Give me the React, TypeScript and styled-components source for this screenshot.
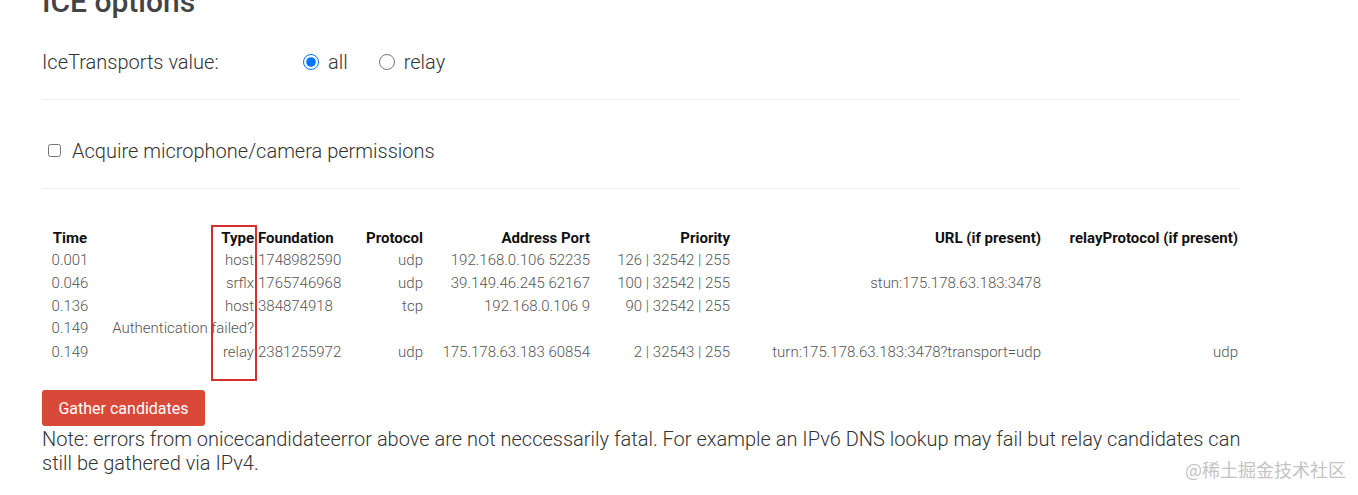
import { styled, createGlobalStyle } from "styled-components";

const GlobalStyle = createGlobalStyle`
    body {
        margin: 0;
        background: #fff;
        font-family: Roboto, "Liberation Sans", sans-serif;
        font-weight: 300;
        color: #444;
    }
`

const Page = styled.div`
    position: relative;
    box-sizing: border-box;
    width: 1358px;
    height: 495px;
    padding: 0 117px 0 42px;
    overflow: hidden;
`

const Title = styled.h2`
    margin: -16px 0 0;
    height: 36px;
    line-height: 36px;
    font-size: 30px;
    font-weight: 500;
    color: #444;
`

const OptionRow = styled.div<{ $top: number }>`
    display: flex;
    align-items: center;
    height: 40px;
    margin-top: ${p => p.$top}px;
    font-size: 20px;
    color: #333;
`

const OptionLabel = styled.span`
    width: 261px;
`

const Radio = styled.input.attrs({ type: "radio", name: "transports" })`
    width: 16px;
    height: 16px;
    margin: 0 9px 0 0;
    accent-color: #0075ff;
`

const RadioText = styled.span`
    margin-right: 31px;
`

const CheckBox = styled.input.attrs({ type: "checkbox" })`
    width: 13px;
    height: 13px;
    margin: -2px 11px 0 6px;
`

const Rule = styled.hr<{ $top: number }>`
    margin: ${p => p.$top}px 0 0;
    border: 0;
    border-top: 1px solid #eee;
    height: 0;
`

const TableWrap = styled.div`
    position: relative;
    margin-top: 37px;
`

const Table = styled.table`
    table-layout: fixed;
    width: 1199px;
    border-spacing: 2px;
    font-size: 15px;
`

const Head = styled.th<{ $w: number; $align: string }>`
    box-sizing: border-box;
    width: ${p => p.$w}px;
    padding: 1px;
    line-height: 18px;
    text-align: ${p => p.$align};
    font-weight: 700;
    color: #111;
    white-space: nowrap;
`

// error rows sit a little tighter, the row after them a little lower
const Cell = styled.td<{ $align: string; $pad: string }>`
    padding: ${p => p.$pad};
    line-height: 19px;
    text-align: ${p => p.$align};
    color: #555;
    white-space: nowrap;
`

const Highlight = styled.div`
    position: absolute;
    left: 169px;
    top: -1px;
    width: 42px;
    height: 152px;
    border: 2px solid #d32f2f;
    pointer-events: none;
`

const GatherButton = styled.button`
    display: block;
    margin-top: 25px;
    width: 163px;
    height: 36px;
    padding: 0;
    border: 0;
    border-radius: 3px;
    background: #d9493a;
    color: #fff;
    font-family: Roboto, "Liberation Sans", sans-serif;
    font-size: 16px;
    font-weight: 400;
`

const Note = styled.p`
    margin: 1px 0 0;
    font-size: 20px;
    line-height: 24px;
    color: #333;
`

const Watermark = styled.div`
    position: absolute;
    right: 12px;
    top: 456px;
    font-family: "Noto Sans CJK SC", sans-serif;
    font-size: 18px;
    font-weight: 400;
    color: #c4c4c4;
`

const columns = [
    { title: "Time", w: 52, align: "center" },
    { title: "Type", w: 157, align: "right" },
    { title: "Foundation", w: 88, align: "left" },
    { title: "Protocol", w: 77, align: "right" },
    { title: "Address Port", w: 165, align: "right" },
    { title: "Priority", w: 138, align: "right" },
    { title: "URL (if present)", w: 309, align: "right" },
    { title: "relayProtocol (if present)", w: 195, align: "right" },
]

const rows = [
    ["0.001", "host", "1748982590", "udp", "192.168.0.106 52235", "126 | 32542 | 255", "", ""],
    ["0.046", "srflx", "1765746968", "udp", "39.149.46.245 62167", "100 | 32542 | 255", "stun:175.178.63.183:3478", ""],
    ["0.136", "host", "384874918", "tcp", "192.168.0.106 9", "90 | 32542 | 255", "", ""],
    ["0.149", "Authentication failed?"],
    ["0.149", "relay", "2381255972", "udp", "175.178.63.183 60854", "2 | 32543 | 255", "turn:175.178.63.183:3478?transport=udp", "udp"],
]

function rowPadding(i: number) {
    if (rows[i].length < 3) return "0 1px"
    if (i > 0 && rows[i - 1].length < 3) return "3px 1px 1px"
    return "1px"
}

export default function App() {
    return (
        <Page>
            <GlobalStyle />
            <Title>ICE options</Title>
            <OptionRow $top={22}>
                <OptionLabel>IceTransports value:</OptionLabel>
                <Radio defaultChecked />
                <RadioText>all</RadioText>
                <Radio />
                <RadioText>relay</RadioText>
            </OptionRow>
            <Rule $top={17} />
            <OptionRow $top={31}>
                <CheckBox />
                <span>Acquire microphone/camera permissions</span>
            </OptionRow>
            <Rule $top={17} />
            <TableWrap>
                <Table>
                    <thead>
                        <tr>
                            {columns.map(c => (
                                <Head key={c.title} $w={c.w} $align={c.align}>{c.title}</Head>
                            ))}
                        </tr>
                    </thead>
                    <tbody>
                        {rows.map((r, i) => (
                            <tr key={i}>
                                {r.map((v, j) => (
                                    <Cell key={j} $align={columns[j].align} $pad={rowPadding(i)}>{v}</Cell>
                                ))}
                            </tr>
                        ))}
                    </tbody>
                </Table>
                <Highlight />
            </TableWrap>
            <GatherButton>Gather candidates</GatherButton>
            <Note>
                Note: errors from onicecandidateerror above are not neccessarily fatal. For example an IPv6 DNS lookup may fail but relay candidates can still be gathered via IPv4.
            </Note>
            <Watermark>@稀土掘金技术社区</Watermark>
        </Page>
    )
}
